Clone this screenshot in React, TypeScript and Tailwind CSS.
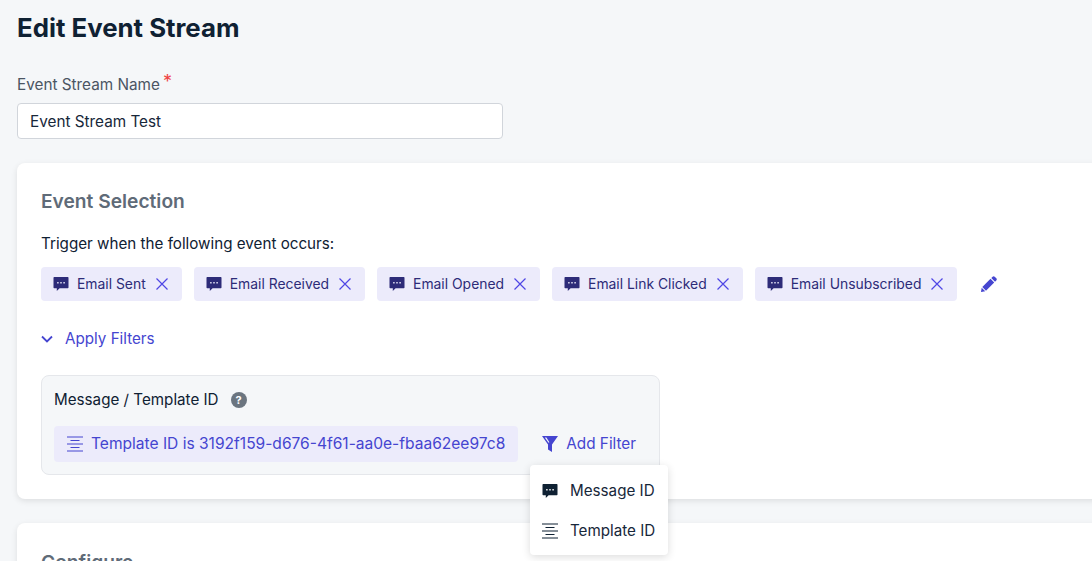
const ChatIcon = ({ className }: { className: string }) => (
  <svg viewBox="0 0 16 16" className={className} fill="currentColor">
    <path fillRule="evenodd" d="M1.200 1h13.600a.7.7 0 0 1 .7.7v9.800a.7.7 0 0 1-.7.7H6.600L3.800 15v-2.800H1.200a.7.7 0 0 1-.7-.7V1.700a.7.7 0 0 1 .7-.7ZM4.200 6v1.500h1.400V6H4.200Zm3.100 0v1.500h1.400V6H7.300Zm3.100 0v1.500h1.400V6h-1.400Z" />
  </svg>
)

const LinesIcon = ({ className }: { className: string }) => (
  <svg viewBox="0 0 16 16" className={className} stroke="currentColor" strokeWidth="1" fill="none">
    <path d="M0 1h16M3.500 4.500h9M0 8h16M3.500 11.500h9M0 15h16" />
  </svg>
)

const CloseIcon = () => (
  <svg viewBox="0 0 12 12" className="w-3 h-3 ml-[10px] text-[#4f46e5]" stroke="currentColor" strokeWidth="1.200" fill="none">
    <path d="M.5.500l11 11M11.500.500l-11 11" />
  </svg>
)

const events = ['Email Sent', 'Email Received', 'Email Opened', 'Email Link Clicked', 'Email Unsubscribed']

export default function App() {
  return (
    <div className="h-[561px] overflow-hidden bg-[#f5f7f9] px-[17px] font-['Inter',sans-serif] relative">
      <h1 className="pt-[12px] text-[25.800px] leading-[32px] font-bold text-[#0f2133]">Edit Event Stream</h1>
      <div className="mt-[30px] flex items-start h-[20px] text-[15.300px] leading-[21px] text-[#4b5563]">
        Event Stream Name<span className="ml-[3px] text-[18px] text-[#ef4444] leading-[16px]">*</span>
      </div>
      <div className="mt-[9px] w-[486px] h-[36px] bg-white border border-[#d1d5db] rounded-[4px] px-3 pt-[2px] flex items-center text-[15.300px] text-[#17273a]">Event Stream Test</div>

      <div className="mt-[24px] w-[1100px] h-[336px] bg-white rounded-[8px] shadow-[0_2px_6px_rgba(0,0,0,0.1)] px-[24px] pt-[25px]">
        <h2 className="text-[19.200px] leading-[26px] font-semibold text-[#5f6b78]">Event Selection</h2>
        <p className="mt-[20px] text-[15.200px] leading-[20px] text-[#0f2133]">Trigger when the following event occurs:</p>
        <div className="mt-[13px] flex items-center gap-[12px]">
          {events.map(e => (
            <div key={e} className="h-[34px] flex items-center pl-[12px] pr-[14px] rounded-[4px] bg-[#ecebfb] text-[13.900px] text-[#2d2b78]">
              <ChatIcon className="w-4 h-4 mr-2" />
              {e}
              <CloseIcon />
            </div>
          ))}
          <svg viewBox="0 0 16 16" className="ml-[12px] w-4 h-4 text-[#4545d0]" fill="currentColor">
            <path d="M11.600.7a1.500 1.500 0 0 1 2.100 0l1.600 1.600a1.500 1.500 0 0 1 0 2.100l-1.300 1.300-3.700-3.700L11.600.7ZM9.500 2.800l3.700 3.700-8.200 8.200-3.700-3.700 8.200-8.200ZM.7 11.800l3.500 3.500-3.900.7-.3-.3.7-3.900Z" />
          </svg>
        </div>
        <div className="mt-[28px] flex items-center text-[15.200px] leading-[20px] text-[#4545d0]">
          <svg viewBox="0 0 12 8" className="w-3 h-2 mr-[12px]" stroke="currentColor" strokeWidth="1.800" fill="none">
            <path d="M1 1.500l5 5 5-5" />
          </svg>
          Apply Filters
        </div>
        <div className="mt-[26px] w-[619px] h-[100px] rounded-[8px] border border-[#e5e7eb] bg-[#f5f7f9] px-[12px] pt-[14px]">
          <div className="flex items-center text-[15.200px] leading-[20px] text-[#0f2133]">
            Message / Template ID
            <span className="ml-[12px] w-4 h-4 rounded-full bg-[#6b7580] text-white text-[11px] leading-none font-bold flex items-center justify-center">?</span>
          </div>
          <div className="mt-[16px] flex items-center">
            <div className="h-[36px] flex items-center pl-[13px] pr-[13px] rounded-[4px] bg-[#ecebfb] text-[15.550px] text-[#4545d0]">
              <LinesIcon className="w-4 h-4 mr-2" />
              Template ID is 3192f159-d676-4f61-aa0e-fbaa62ee97c8
            </div>
            <div className="ml-[24px] flex items-center text-[15.300px] text-[#4545d0]">
              <svg viewBox="0 0 16 16" className="w-4 h-4 mr-2" fill="currentColor">
                <path fillRule="evenodd" d="M0 0h16L10 8.500V16l-4-2.500V8.500L0 0Zm2.800 1.500L6.500 6.800l.9-.6L4.400 1.500H2.800Z" />
              </svg>
              Add Filter
            </div>
          </div>
        </div>
      </div>

      <div className="mt-[24px] w-[1100px] h-[100px] bg-white rounded-[8px] shadow-[0_2px_6px_rgba(0,0,0,0.1)] px-[24px] pt-[26px]">
        <h2 className="text-[19.200px] leading-[26px] font-semibold text-[#5f6b78]">Configure</h2>
      </div>

      <div className="absolute left-[530px] top-[465px] w-[138px] h-[90px] bg-white rounded-[4px] shadow-[0_2px_8px_rgba(0,0,0,0.14)] pt-[6px] text-[15.200px] text-[#17273a]">
        <div className="h-[40px] flex items-center px-[12px]">
          <ChatIcon className="w-4 h-4 mr-3 text-[#0f2133] shrink-0" />
          Message ID
        </div>
        <div className="h-[40px] flex items-center px-[12px]">
          <LinesIcon className="w-4 h-4 mr-3 text-[#0f2133] shrink-0" />
          Template ID
        </div>
      </div>
    </div>
  )
}
